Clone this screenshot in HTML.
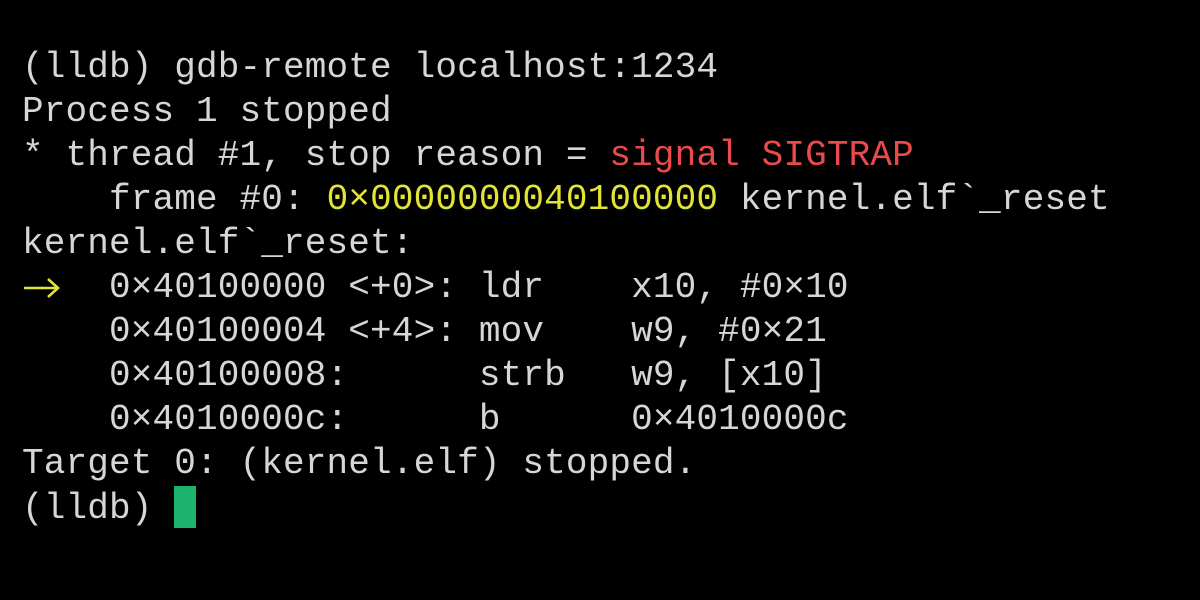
<!DOCTYPE html>
<html><head><style>
html,body{margin:0;padding:0;background:#000;width:1200px;height:600px;overflow:hidden}
pre{position:absolute;left:22px;top:46px;margin:0;font-family:"Liberation Mono",monospace;font-size:36px;line-height:44px;letter-spacing:0.15px;color:#d6d6d6}
.y{color:#e3e336}.r{color:#ea4a4c}
.c{display:inline-block;width:22px;height:42px;background:#1cb46c;vertical-align:-10px}
svg{position:absolute;left:22px;top:276px}
</style></head><body>
<pre>(lldb) gdb-remote localhost:1234
Process 1 stopped
* thread #1, stop reason = <span class="r">signal SIGTRAP</span>
    frame #0: <span class="y">0×0000000040100000</span> kernel.elf`_reset
kernel.elf`_reset:
    0×40100000 &lt;+0&gt;: ldr    x10, #0×10
    0×40100004 &lt;+4&gt;: mov    w9, #0×21
    0×40100008:      strb   w9, [x10]
    0×4010000c:      b      0×4010000c
Target 0: (kernel.elf) stopped.
(lldb) <span class="c"></span></pre>
<svg width="40" height="24" viewBox="0 0 40 24"><path d="M2 12H36M26 3L36 12L26 21" fill="none" stroke="#e3e336" stroke-width="2.6"/></svg>
</body></html>
